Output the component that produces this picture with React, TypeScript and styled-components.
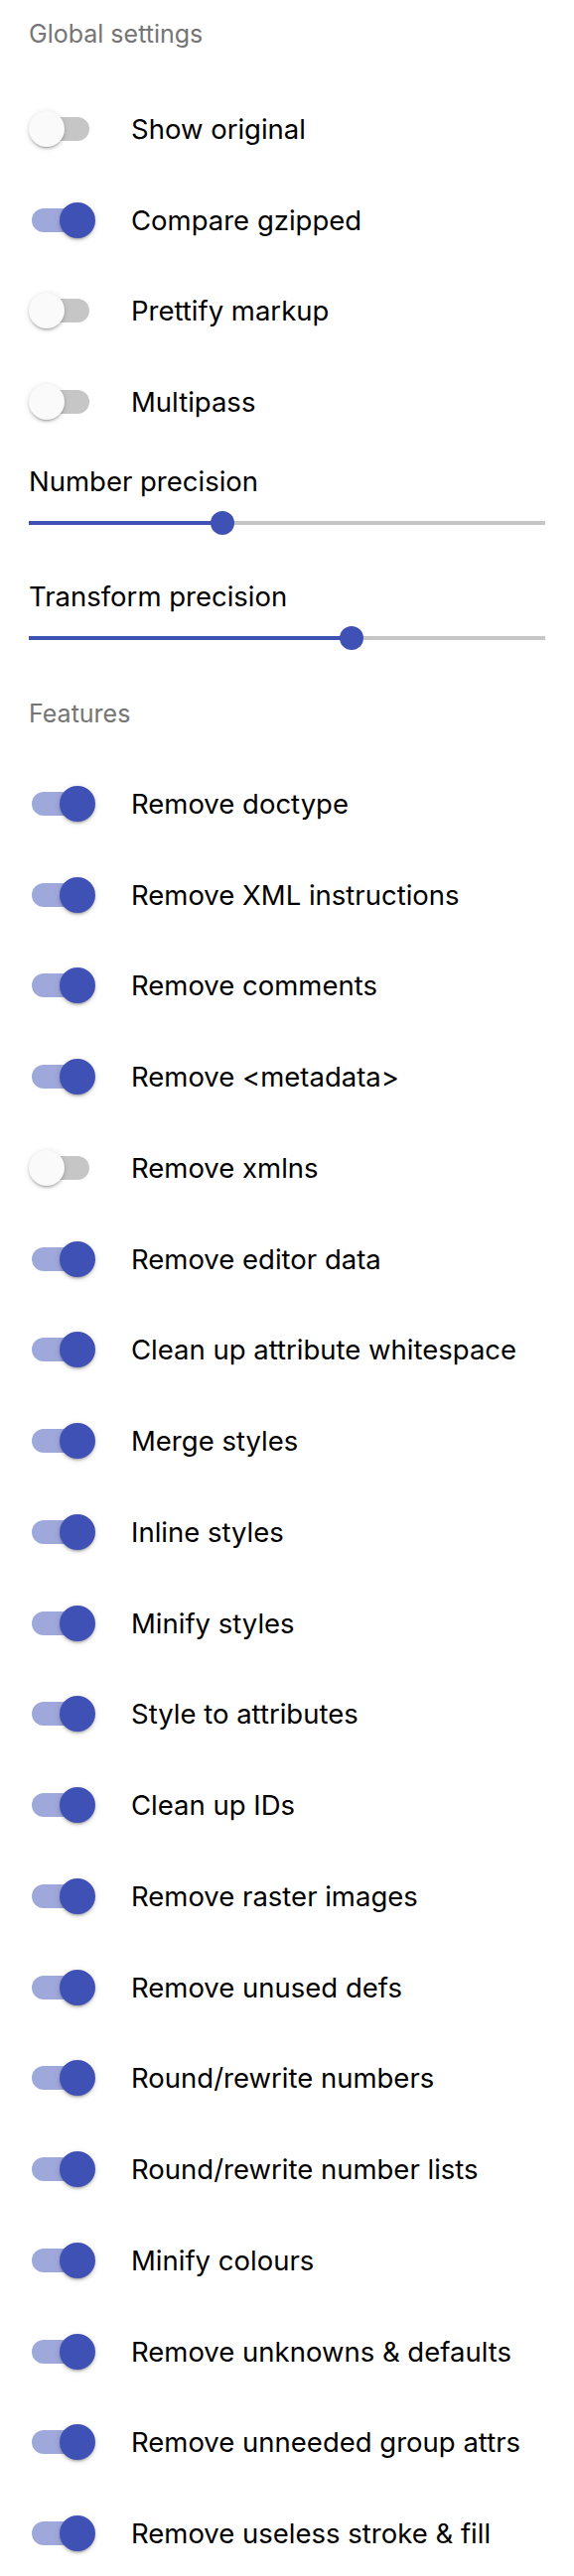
import styled, { createGlobalStyle } from "styled-components";

const Colors = {
  primary: "#3f51b5",
  primaryTrack: "#9fa8da",
  offTrack: "#c6c6c6",
  offKnob: "#fafafa",
  heading: "#757575",
  text: "#000000",
};

const GlobalStyle = createGlobalStyle`
  body {
    margin: 0;
    background: #ffffff;
    font-family: Inter, "Liberation Sans", sans-serif;
    color: ${Colors.text};
  }
`;

const globalSettings = [
  { label: "Show original", on: false },
  { label: "Compare gzipped", on: true },
  { label: "Prettify markup", on: false },
  { label: "Multipass", on: false },
];

const sliders = [
  { label: "Number precision", value: 3, max: 8 },
  { label: "Transform precision", value: 5, max: 8 },
];

const features = [
  { label: "Remove doctype", on: true },
  { label: "Remove XML instructions", on: true },
  { label: "Remove comments", on: true },
  { label: "Remove <metadata>", on: true },
  { label: "Remove xmlns", on: false },
  { label: "Remove editor data", on: true },
  { label: "Clean up attribute whitespace", on: true },
  { label: "Merge styles", on: true },
  { label: "Inline styles", on: true },
  { label: "Minify styles", on: true },
  { label: "Style to attributes", on: true },
  { label: "Clean up IDs", on: true },
  { label: "Remove raster images", on: true },
  { label: "Remove unused defs", on: true },
  { label: "Round/rewrite numbers", on: true },
  { label: "Round/rewrite number lists", on: true },
  { label: "Minify colours", on: true },
  { label: "Remove unknowns & defaults", on: true },
  { label: "Remove unneeded group attrs", on: true },
  { label: "Remove useless stroke & fill", on: true },
];

const Toggle = ({ on }: { on: boolean }) => (
  <ToggleTrack $on={on}>
    <ToggleKnob $on={on} />
  </ToggleTrack>
);

const Slider = ({ value, max }: { value: number; max: number }) => (
  <SliderBox>
    <SliderRail>
      <SliderFill style={{ width: `${(value / max) * 100}%` }} />
      <SliderThumb style={{ left: `${(value / max) * 100}%` }} />
    </SliderRail>
  </SliderBox>
);

export default function App() {
  return (
    <>
      <GlobalStyle />
      <Panel>
        <SectionTitle $top={18} $bottom={34}>
          Global settings
        </SectionTitle>
        <ToggleList>
          {globalSettings.map((s) => (
            <ToggleRow key={s.label}>
              <Toggle on={s.on} />
              <RowLabel>{s.label}</RowLabel>
            </ToggleRow>
          ))}
        </ToggleList>
        {sliders.map((s) => (
          <SliderGroup key={s.label}>
            <SliderLabel>{s.label}</SliderLabel>
            <Slider value={s.value} max={s.max} />
          </SliderGroup>
        ))}
        <SectionTitle $top={34} $bottom={29}>
          Features
        </SectionTitle>
        <ToggleList>
          {features.map((s) => (
            <ToggleRow key={s.label}>
              <Toggle on={s.on} />
              <RowLabel>{s.label}</RowLabel>
            </ToggleRow>
          ))}
        </ToggleList>
      </Panel>
    </>
  );
}

const Panel = styled.div`
  padding: 0 29px;
  display: flex;
  flex-direction: column;
`;

const SectionTitle = styled.h2<{ $top: number; $bottom: number }>`
  margin: ${(p) => p.$top}px 0 ${(p) => p.$bottom}px 0;
  font-size: 25px;
  line-height: 32px;
  font-weight: 400;
  color: ${Colors.heading};
`;

const ToggleList = styled.div`
  display: flex;
  flex-direction: column;
`;

const ToggleRow = styled.label`
  height: 91.75px;
  display: flex;
  align-items: center;
  gap: 42px;
`;

const ToggleTrack = styled.span<{ $on: boolean }>`
  position: relative;
  flex-shrink: 0;
  margin-left: 3px;
  width: 58px;
  height: 24px;
  border-radius: 12px;
  background: ${(p) => (p.$on ? Colors.primaryTrack : Colors.offTrack)};
`;

const ToggleKnob = styled.span<{ $on: boolean }>`
  position: absolute;
  top: -6px;
  left: ${(p) => (p.$on ? "28px" : "-3px")};
  width: 36px;
  height: 36px;
  border-radius: 50%;
  background: ${(p) => (p.$on ? Colors.primary : Colors.offKnob)};
  box-shadow: 0 3px 2px -2px rgba(0, 0, 0, 0.2), 0 2px 3px 0 rgba(0, 0, 0, 0.14),
    0 1px 6px 0 rgba(0, 0, 0, 0.12);
`;

const RowLabel = styled.span`
  font-size: 27.5px;
  line-height: 32px;
  color: ${Colors.text};
`;

const SliderGroup = styled.div`
  display: flex;
  flex-direction: column;
  margin-top: 18px;
  & + & {
    margin-top: 32px;
  }
`;

const SliderLabel = styled.div`
  font-size: 27.5px;
  line-height: 32px;
  color: ${Colors.text};
`;

const SliderBox = styled.div`
  height: 52px;
  display: flex;
  align-items: center;
`;

const SliderRail = styled.div`
  position: relative;
  width: 100%;
  height: 4px;
  background: ${Colors.offTrack};
`;

const SliderFill = styled.div`
  height: 100%;
  background: ${Colors.primary};
`;

const SliderThumb = styled.span`
  position: absolute;
  top: 50%;
  width: 24px;
  height: 24px;
  margin: -12px 0 0 -12px;
  border-radius: 50%;
  background: ${Colors.primary};
`;
